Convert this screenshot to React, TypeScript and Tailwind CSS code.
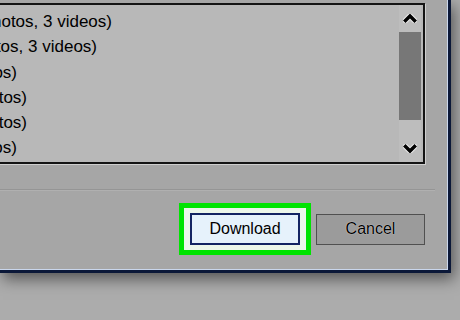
import React from "react";

const rows = [
  { text: "Apple iPhone (1,204 photos, 3 videos)", w: "w-[114px]" },
  { text: "Apple iPad (512 photos, 3 videos)", w: "w-[99px]" },
  { text: "Camera (48 photos)", w: "w-[19px]" },
  { text: "Downloads (36 photos)", w: "w-[29px]" },
  { text: "Screenshots (27 photos)", w: "w-[29px]" },
  { text: "WhatsApp (96 photos)", w: "w-[19px]" },
];

function Chevron({ down }: { down?: boolean }) {
  const d = down ? "M2.5 2.5 L7 7 L11.5 2.5" : "M2.5 6.5 L7 2 L11.5 6.5";
  return (
    <svg width="14" height="9" viewBox="0 0 14 9">
      <path d={d} fill="none" stroke="#ffffff" strokeWidth="5.5" strokeLinecap="round" strokeLinejoin="round" opacity="0.75" />
      <path d={d} fill="none" stroke="#000000" strokeWidth="3.5" strokeLinecap="square" strokeLinejoin="miter" />
    </svg>
  );
}

export default function App() {
  return (
    <div className="w-[460px] h-[320px] overflow-hidden bg-[#acacac] font-['Liberation_Sans',Arial,sans-serif] text-black">
      <div className="w-[451px] h-[273px] bg-[#a6a6a6] border-r-[3px] border-b-[3px] border-[#0b1838] shadow-[3px_6px_14px_rgba(0,0,0,0.5)]">
        <div className="h-full flex flex-col pt-[3px] border-r border-b border-[#c9d6ec]">
          <div className="ml-[-4px] w-[429px] h-[161px] border-2 border-[#141414] bg-[#b8b8b8] flex shadow-[1px_1px_0_#cfcfcf]">
            <div className="flex-1 flex flex-col pt-[4px] overflow-hidden">
              {rows.map((r) => (
                <div
                  key={r.text}
                  className={`${r.w} h-[25.3px] flex justify-end overflow-hidden whitespace-nowrap text-[17px] leading-[25px]`}
                >
                  <span className="shrink-0">{r.text}</span>
                </div>
              ))}
            </div>
            <div className="w-[22px] mr-[2px] bg-[#bdbdbd] flex flex-col">
              <div className="h-[27px] flex items-center justify-center">
                <Chevron />
              </div>
              <div className="h-[88px] bg-[#777777]" />
              <div className="flex-1" />
              <div className="h-[28px] flex items-center justify-center">
                <Chevron down />
              </div>
            </div>
          </div>
          <div className="mt-[25px] w-[435px] border-t border-[#959595] border-b border-b-[#b0b0b0]" />
          <div className="mt-[12px] flex items-center justify-end gap-[5px] pr-[22px]">
            <div className="bg-[#00e400] p-[5px]">
              <div className="bg-[#edf7ea] px-[6px] py-[5px]">
                <div className="w-[110px] h-[32px] border-2 border-[#142462] bg-[#e6f2fb] flex items-center justify-center text-[16px]">
                  Download
                </div>
              </div>
            </div>
            <div className="w-[109px] h-[31px] border border-[#505050] bg-[#9b9b9b] flex items-center justify-center text-[16px] [text-shadow:0_0_1px_#ffffff]">
              Cancel
            </div>
          </div>
        </div>
      </div>
    </div>
  );
}
